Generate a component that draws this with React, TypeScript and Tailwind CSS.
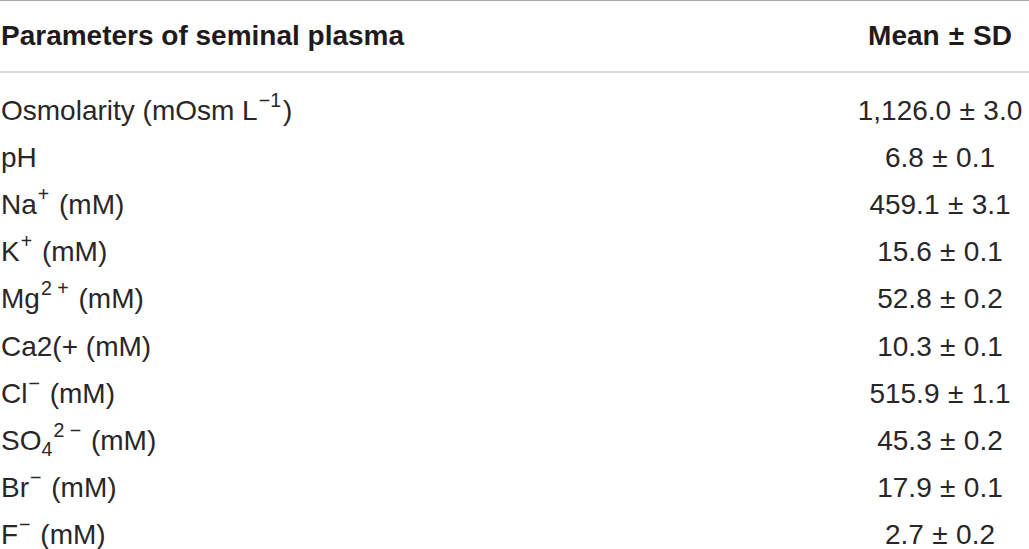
import type { ReactNode } from 'react';

type Row = { label: ReactNode; value: string };

const Sup = ({ children }: { children: ReactNode }) => (
  <sup className="text-[0.7em] top-[-0.66em] ml-[1px] mr-[2px]">{children}</sup>
);

// values are "a ± b"; the ± gets extra room like in the source typeface
const Val = ({ v }: { v: string }) => {
  const [a, b] = v.split(' ± ');
  return (
    <>
      {a}
      <span className="mx-[0.3em]">±</span>
      {b}
    </>
  );
};

const rows: Row[] = [
  { label: <>Osmolarity (mOsm L<Sup>−1</Sup>)</>, value: '1,126.0 ± 3.0' },
  { label: 'pH', value: '6.8 ± 0.1' },
  { label: <>Na<Sup>+</Sup> (mM)</>, value: '459.1 ± 3.1' },
  { label: <>K<Sup>+</Sup> (mM)</>, value: '15.6 ± 0.1' },
  { label: <>Mg<Sup>2 +</Sup> (mM)</>, value: '52.8 ± 0.2' },
  { label: 'Ca2(+ (mM)', value: '10.3 ± 0.1' },
  { label: <>Cl<Sup>−</Sup> (mM)</>, value: '515.9 ± 1.1' },
  {
    label: (
      <>
        SO<sub className="text-[0.7em] bottom-[-0.3em]">4</sub>
        <Sup>2 −</Sup> (mM)
      </>
    ),
    value: '45.3 ± 0.2',
  },
  { label: <>Br<Sup>−</Sup> (mM)</>, value: '17.9 ± 0.1' },
  { label: <>F<Sup>−</Sup> (mM)</>, value: '2.7 ± 0.2' },
];

export default function App() {
  return (
    <div
      className="w-[1029px] h-[549px] overflow-hidden bg-white text-[#2a2627]"
      style={{ fontFamily: '"Liberation Sans", Arial, sans-serif' }}
    >
      <div className="border-t border-[#a9a9a9]">
        <div className="flex items-center h-[72px] text-[28px] font-bold text-[#1f1b1c] border-b-2 border-[#d9d9d9]">
          <div className="flex-1 pl-[1px]">Parameters of seminal plasma</div>
          <div className="w-[178px] text-center">
            Mean<span className="mx-[0.32em]">±</span>SD
          </div>
        </div>

        <div className="pt-[14px]">
          {rows.map((r, i) => (
            <div key={i} className="flex items-center h-[47.2px] text-[28px] leading-none">
              <div className="flex-1 pl-[1px] whitespace-nowrap">{r.label}</div>
              <div className="w-[178px] text-center whitespace-nowrap">
                <Val v={r.value} />
              </div>
            </div>
          ))}
        </div>
      </div>
    </div>
  );
}
